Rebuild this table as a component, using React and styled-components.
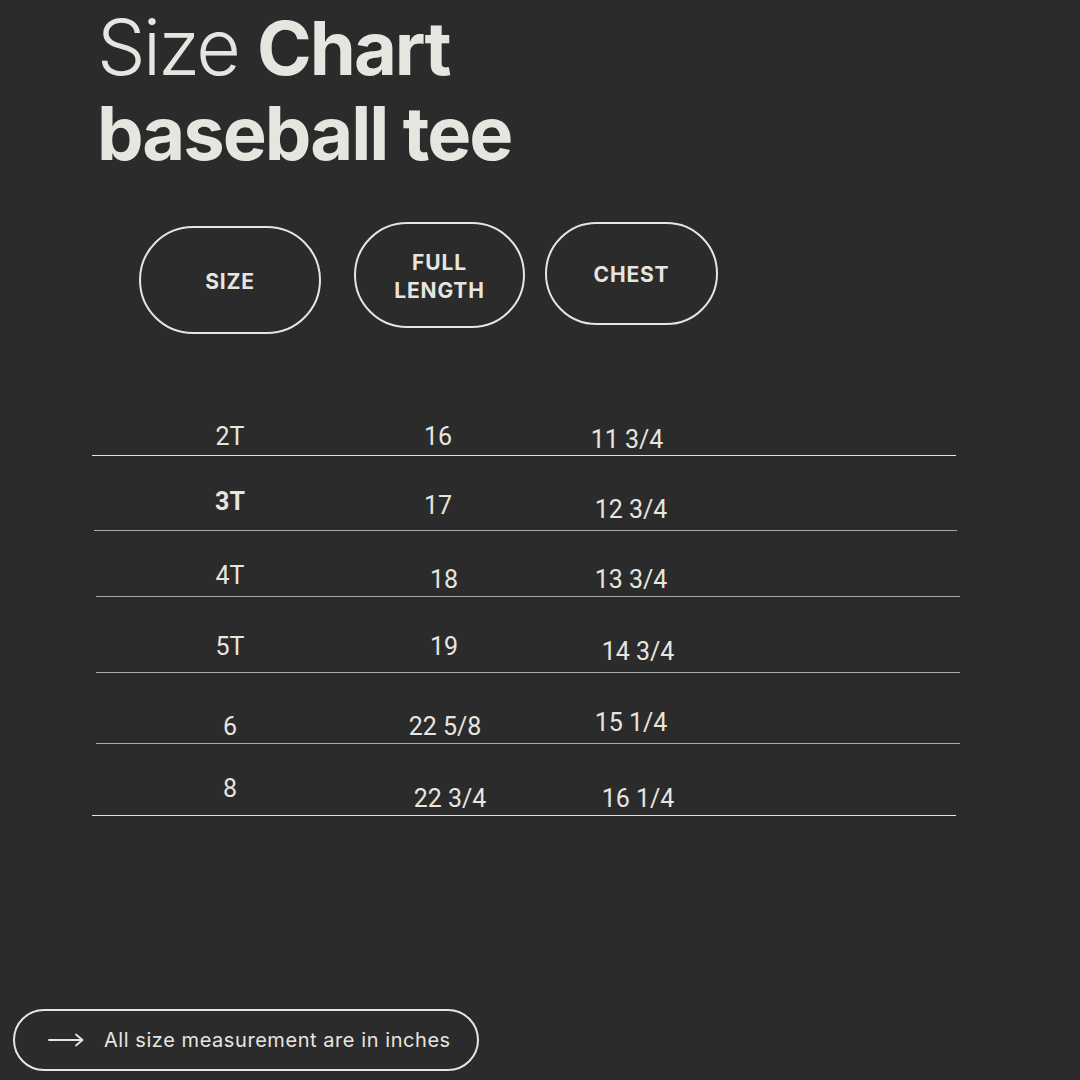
import React from "react";
import styled, { createGlobalStyle } from "styled-components";

const Global = createGlobalStyle`
  html, body { margin: 0; padding: 0; background: #2b2b2b; }
  * { box-sizing: border-box; }
`;

const INK = "#e7e5e0";

const Page = styled.div`
  width: 1080px;
  height: 1080px;
  background: #2b2b2b;
  color: ${INK};
  display: flex;
  flex-direction: column;
  font-family: Inter, "Liberation Sans", sans-serif;
  overflow: hidden;
`;

const Title = styled.h1`
  margin: 4px 0 0 97px;
  font-weight: 400;
`;

const TitleLine = styled.div`
  height: ${(p) => p.$h}px;
  line-height: ${(p) => p.$h}px;
  white-space: nowrap;
`;

const Light = styled.span`
  display: inline-block;
  font-size: 77px;
  font-weight: 300;
  letter-spacing: -0.035em;
  white-space: pre;
`;

const Bold = styled.span`
  display: inline-block;
  font-size: 74px;
  font-weight: 700;
  letter-spacing: -0.027em;
  white-space: pre;
`;

const Headers = styled.div`
  display: flex;
  align-items: flex-start;
  margin-top: 46px;
  padding-left: 139px;
`;

const Pill = styled.div`
  width: ${(p) => p.$w}px;
  height: ${(p) => p.$h}px;
  margin-top: ${(p) => p.$mt}px;
  margin-left: ${(p) => p.$ml}px;
  border: 2px solid ${INK};
  border-radius: ${(p) => p.$h / 2}px;
  display: flex;
  align-items: center;
  justify-content: center;
  text-align: center;
  font-family: Inter, "Liberation Sans", sans-serif;
  font-weight: 700;
  font-size: 21px;
  line-height: 28px;
  letter-spacing: 0.04em;
  padding-top: 3px;
`;

const Table = styled.div`
  display: flex;
  flex-direction: column;
  margin-top: 66px;
  font-family: Roboto, "Liberation Sans", sans-serif;
`;

const Row = styled.div`
  display: grid;
  grid-template-columns: 276px 144px 238px 1fr;
  align-items: start;
  width: ${(p) => p.$w}px;
  height: ${(p) => p.$h}px;
  margin-left: ${(p) => p.$ml}px;
  border-bottom: 1.5px solid ${(p) => (p.$strong ? "#e2e2e2" : "#a9a9a7")};
`;

const Cell = styled.div`
  text-align: center;
  font-size: 25px;
  line-height: 30px;
  font-weight: ${(p) => (p.$bold ? 700 : 400)};
  margin-top: ${(p) => p.$mt}px;
  padding-left: ${(p) => Math.max(0, p.$dx * 2)}px;
  padding-right: ${(p) => Math.max(0, -p.$dx * 2)}px;
  white-space: nowrap;
`;

const Footer = styled.div`
  margin: auto 0 9px 13px;
  width: 466px;
  height: 62px;
  border: 2px solid ${INK};
  border-radius: 31px;
  display: flex;
  align-items: center;
  gap: 20px;
  padding-left: 33px;
  font-family: Inter, "Liberation Sans", sans-serif;
  font-size: 20px;
  font-weight: 400;
  letter-spacing: 0.028em;
`;

const Arrow = () => (
  <svg width="36" height="14" viewBox="0 0 36 14" fill="none">
    <path d="M1 7H34" stroke={INK} strokeWidth="1.8" strokeLinecap="round" />
    <path d="M28 1.5L34.5 7L28 12.5" stroke={INK} strokeWidth="1.8" strokeLinecap="round" strokeLinejoin="round" />
  </svg>
);

const COLS = [138, 348, 539];

const rows = [
  { line: 455, left: 92, right: 956, strong: true, cells: [["2T", 230, 437], ["16", 438, 437], ["11 3/4", 627, 440]] },
  { line: 530, left: 94, right: 957, cells: [["3T", 230, 502, true], ["17", 438, 506], ["12 3/4", 631, 510]] },
  { line: 596, left: 96, right: 960, cells: [["4T", 230, 576], ["18", 444, 580], ["13 3/4", 631, 580]] },
  { line: 672, left: 96, right: 960, cells: [["5T", 230, 647], ["19", 444, 647], ["14 3/4", 638, 652]] },
  { line: 743, left: 96, right: 960, cells: [["6", 230, 727], ["22 5/8", 445, 727], ["15 1/4", 631, 723]] },
  { line: 815, left: 92, right: 956, strong: true, cells: [["8", 230, 789], ["22 3/4", 450, 799], ["16 1/4", 638, 799]] },
];

const TABLE_TOP = 400;

export default function App() {
  let top = TABLE_TOP;
  return (
    <>
      <Global />
      <Page>
        <Title>
          <TitleLine $h={86}>
            <Light>Size </Light>
            <Bold>Chart</Bold>
          </TitleLine>
          <TitleLine $h={86}>
            <Bold>baseball tee</Bold>
          </TitleLine>
        </Title>

        <Headers>
          <Pill $w={182} $h={108} $mt={4} $ml={0}>SIZE</Pill>
          <Pill $w={171} $h={106} $mt={0} $ml={33}>FULL<br />LENGTH</Pill>
          <Pill $w={173} $h={103} $mt={0} $ml={20}>CHEST</Pill>
        </Headers>

        <Table>
          {rows.map((r, i) => {
            const rowTop = top;
            const h = r.line + 1 - rowTop;
            top = r.line + 1;
            return (
              <Row key={i} $w={r.right - r.left} $h={h} $ml={r.left} $strong={r.strong}>
                {r.cells.map(([t, x, y, b], j) => (
                  <Cell key={j} $bold={b} $mt={y - rowTop - 15} $dx={x - (r.left + COLS[j])}>
                    {t}
                  </Cell>
                ))}
              </Row>
            );
          })}
        </Table>

        <Footer>
          <Arrow />
          <span>All size measurement are in inches</span>
        </Footer>
      </Page>
    </>
  );
}
